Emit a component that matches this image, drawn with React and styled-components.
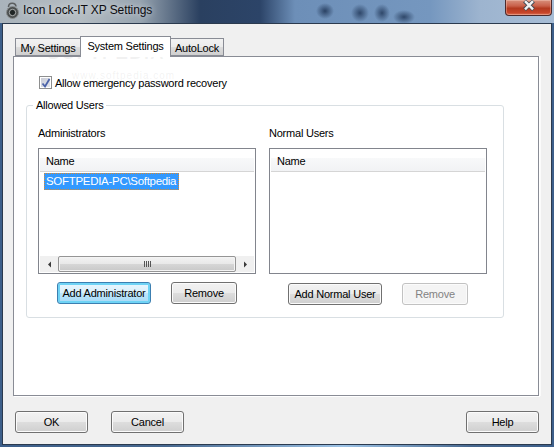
import styled, { createGlobalStyle } from 'styled-components';

const GlobalStyle = createGlobalStyle`
  html, body {
    margin: 0;
    padding: 0;
    width: 554px;
    height: 447px;
    overflow: hidden;
    font-family: "Liberation Sans", Arial, sans-serif;
    font-size: 11px;
    letter-spacing: -0.22px;
    color: #000;
  }
  * { box-sizing: border-box; }
`;

const Window = styled.div`
  position: relative;
  width: 554px;
  height: 447px;
  display: flex;
  flex-direction: column;
  overflow: hidden;
  background: linear-gradient(90deg, #3d5f8a 0, #47688f 30%, #9dc3e6 62%, #47688f 85%, #3d5f8a 100%);
`;

const TitleBar = styled.div`
  height: 23px;
  flex: none;
  display: flex;
  align-items: flex-start;
  padding-left: 5px;
  background:
    radial-gradient(ellipse 9px 8px at 325px 11px, rgba(30, 52, 85, 0.85), transparent),
    radial-gradient(ellipse 9px 9px at 360px 13px, rgba(30, 52, 85, 0.8), transparent),
    radial-gradient(ellipse 8px 9px at 382px 13px, rgba(30, 52, 85, 0.8), transparent),
    radial-gradient(ellipse 11px 7px at 404px 17px, rgba(30, 52, 85, 0.8), transparent),
    linear-gradient(90deg, #a9b3bb 0, #b4bcc2 80px, #97a4b0 140px, #2a4060 200px, #2c4468 260px, #6d8fb8 295px, #7597bf 430px, #9db4cf 480px, #a7bdd6 554px);
`;

const AppIcon = styled.svg`
  width: 15px;
  height: 18px;
  margin-top: 1px;
  flex: none;
`;

const TitleText = styled.span`
  margin: 2px 0 0 3px;
  font-size: 12px;
  line-height: 16px;
  letter-spacing: -0.1px;
  color: #0c0c10;
  text-shadow: 0 0 6px rgba(255, 255, 255, 0.75);
`;

const CloseButton = styled.div`
  width: 47px;
  height: 16px;
  margin-left: auto;
  margin-right: 2px;
  display: flex;
  align-items: flex-start;
  justify-content: center;
  border: 1px solid #4c2a2c;
  border-top: 0;
  border-radius: 0 0 4px 4px;
  box-shadow: inset 0 0 0 1px rgba(255, 220, 210, 0.35);
  background: linear-gradient(180deg, #d8907c 0, #c9604a 40%, #b23a20 55%, #c8452a 85%, #d9765a 100%);
`;

const Client = styled.div`
  flex: 1;
  margin: 0 2px 2px 2px;
  border: 1px solid #2b3a4e;
  background: #f0f0f0;
  display: flex;
  flex-direction: column;
  padding: 0 12px 0 10px;
`;

const TabStrip = styled.div`
  height: 32px;
  flex: none;
  display: flex;
  align-items: flex-end;
  padding-left: 2px;
  position: relative;
  z-index: 1;
`;

const Tab = styled.div`
  height: ${(p) => (p.$active ? '21px' : '18px')};
  width: ${(p) => p.$width}px;
  margin-left: ${(p) => (p.$active ? '-1px' : '0')};
  margin-right: ${(p) => (p.$active ? '-1px' : '0')};
  padding-top: 2px;
  border: 1px solid #898c95;
  border-bottom: ${(p) => (p.$active ? '0' : '1px solid #898c95')};
  background: ${(p) => (p.$active ? '#fff' : 'linear-gradient(180deg, #f2f2f2 0, #ebebeb 50%, #dcdcdc 52%, #cfcfcf 100%)')};
  position: relative;
  z-index: ${(p) => (p.$active ? 2 : 1)};
  margin-bottom: ${(p) => (p.$active ? '-1px' : '0')};
  text-align: center;
  line-height: 14px;
  white-space: nowrap;
`;

const TabPanel = styled.div`
  height: 340px;
  flex: none;
  background: #fff;
  border: 1px solid #898c95;
  box-shadow: 1px 1px 0 #fff, 2px 0 0 #fbfbfb;
  padding: 19px 12px 0 12px;
  display: flex;
  flex-direction: column;
`;

const CheckRow = styled.div`
  display: flex;
  align-items: center;
  height: 13px;
  margin-left: 13px;
  gap: 3px;
`;

const CheckBox = styled.div`
  width: 13px;
  height: 13px;
  flex: none;
  border: 1px solid #8e8f8f;
  background: linear-gradient(135deg, #c6c9d4, #e6e8ef);
  box-shadow: inset 0 0 0 1px #fff;
  display: flex;
  align-items: center;
  justify-content: center;
`;

const GroupBox = styled.div`
  position: relative;
  margin-top: 16px;
  height: 213px;
  width: 478px;
  border: 1px solid #d9dfe3;
  border-radius: 3px;
  padding: 20px 11px 0 11px;
  display: grid;
  grid-template-columns: 218px 218px;
  column-gap: 13px;
`;

const GroupLegend = styled.span`
  position: absolute;
  top: -8px;
  left: 6px;
  padding: 0 3px;
  background: #fff;
  line-height: 15px;
`;

const Column = styled.div`
  display: flex;
  flex-direction: column;
`;

const FieldLabel = styled.div`
  height: 15px;
  line-height: 15px;
  margin-bottom: 7px;
`;

const ListBox = styled.div`
  height: 126px;
  border: 1px solid #82858d;
  background: #fff;
  padding: 9px 1px 1px 1px;
  display: flex;
  flex-direction: column;
`;

const ListHeader = styled.div`
  height: 14px;
  flex: none;
  padding-left: 6px;
  line-height: 6px;
  border-bottom: 1px solid #d5d5d5;
  background: linear-gradient(180deg, #f8f9fa, #f1f2f4);
`;

const ListBody = styled.div`
  flex: 1;
  padding: 1px 0 0 4px;
`;

const ListRow = styled.div`
  display: inline-block;
  height: 17px;
  width: 135px;
  padding-left: 2px;
  line-height: 16px;
  font-size: 11.5px;
  letter-spacing: -0.3px;
  color: #fff;
  background: #3399ff;
  outline: 1px dotted #d98a30;
  outline-offset: -1px;
  white-space: nowrap;
`;

const ScrollBar = styled.div`
  height: 16px;
  flex: none;
  display: flex;
  align-items: stretch;
  background: #f0f0f0;
`;

const ScrollArrow = styled.div`
  width: 18px;
  flex: none;
  display: flex;
  align-items: center;
  justify-content: center;
`;

const ScrollThumb = styled.div`
  flex: 1;
  border: 1px solid #959595;
  border-radius: 2px;
  box-shadow: inset 0 0 0 1px #f4f4f4;
  background: linear-gradient(180deg, #f3f3f3 0, #e8e8e8 50%, #d6d6d6 52%, #c8c8c8 100%);
  display: flex;
  align-items: center;
  justify-content: center;
  gap: 1px;
`;

const GripLine = styled.i`
  width: 1px;
  height: 6px;
  background: #555;
`;

const ButtonRow = styled.div`
  display: flex;
  margin-top: ${(p) => p.$top}px;
  padding-left: 19px;
  gap: 20px;
`;

const Button = styled.div`
  width: ${(p) => p.$width}px;
  height: 22px;
  display: flex;
  align-items: center;
  justify-content: center;
  white-space: nowrap;
  border-radius: 3px;
  border: 1px solid ${(p) => (p.$default ? '#3c7fb1' : p.$disabled ? '#c2c2c2' : '#707070')};
  color: ${(p) => (p.$disabled ? '#838383' : '#000')};
  box-shadow: ${(p) => (p.$default ? 'inset 0 0 0 2px #6fd3f5' : 'inset 0 0 0 1px #fbfbfb')};
  background: ${(p) => (p.$disabled
    ? '#f4f4f4'
    : p.$default
      ? 'linear-gradient(180deg, #eaf6fd 0, #d9f0fc 50%, #bee6fd 52%, #a7d9f5 100%)'
      : 'linear-gradient(180deg, #f2f2f2 0, #ebebeb 50%, #dddddd 52%, #cfcfcf 100%)')};
`;

const Footer = styled.div`
  flex: 1;
  display: flex;
  align-items: flex-start;
  padding: 15px 0 0 2px;
  gap: 23px;
`;

const FooterSpacer = styled.div`
  flex: 1;
`;

const Watermark = styled.div`
  position: absolute;
  left: ${(p) => p.$left}px;
  top: ${(p) => p.$top}px;
  font-size: ${(p) => p.$size}px;
  font-weight: ${(p) => p.$weight};
  color: rgba(150, 150, 150, 0.12);
  letter-spacing: 1px;
  white-space: nowrap;
  pointer-events: none;
`;

const Triangle = ({ dir }) => (
  <svg width="5" height="7" viewBox="0 0 5 7">
    <path d={dir === 'left' ? 'M4 0.5 L1 3.5 L4 6.5 Z' : 'M1 0.5 L4 3.5 L1 6.5 Z'} fill="#3a3a3a" />
  </svg>
);

export default function App() {
  return (
    <>
      <GlobalStyle />
      <Window>
        <TitleBar>
          <AppIcon viewBox="0 0 15 18">
            <path d="M3.5 6 C3.5 1 10.5 1 11 5.5" fill="none" stroke="#5c5f60" strokeWidth="1.6" />
            <circle cx="7.5" cy="11.5" r="6" fill="#4c5050" stroke="#8b8f90" strokeWidth="1" />
            <circle cx="7.5" cy="11.5" r="3.2" fill="#1f2525" stroke="#c9cccc" strokeWidth="0.8" />
          </AppIcon>
          <TitleText>Icon Lock-IT XP Settings</TitleText>
          <CloseButton>
            <svg width="14" height="11" viewBox="0 0 14 11">
              <path d="M2.5 1 L11.5 9.5 M11.5 1 L2.5 9.5" stroke="#3f4a55" strokeWidth="4" />
              <path d="M3 1.2 L11 9.3 M11 1.2 L3 9.3" stroke="#f2f2f2" strokeWidth="2.4" />
            </svg>
          </CloseButton>
        </TitleBar>
        <Client>
          <TabStrip>
            <Tab $width={66}>My Settings</Tab>
            <Tab $active $width={91}>System Settings</Tab>
            <Tab $width={54}>AutoLock</Tab>
          </TabStrip>
          <TabPanel>
            <CheckRow>
              <CheckBox>
                <svg width="10" height="10" viewBox="0 0 10 10">
                  <path d="M1.5 5.5 L4 8.5 L8.5 1" fill="none" stroke="#4a62a8" strokeWidth="1.8" />
                </svg>
              </CheckBox>
              Allow emergency password recovery
            </CheckRow>
            <GroupBox>
              <GroupLegend>Allowed Users</GroupLegend>
              <Column>
                <FieldLabel>Administrators</FieldLabel>
                <ListBox>
                  <ListHeader>Name</ListHeader>
                  <ListBody>
                    <ListRow>SOFTPEDIA-PC\Softpedia</ListRow>
                  </ListBody>
                  <ScrollBar>
                    <ScrollArrow><Triangle dir="left" /></ScrollArrow>
                    <ScrollThumb><GripLine /><GripLine /><GripLine /><GripLine /></ScrollThumb>
                    <ScrollArrow><Triangle dir="right" /></ScrollArrow>
                  </ScrollBar>
                </ListBox>
                <ButtonRow $top={8}>
                  <Button $default $width={94}>Add Administrator</Button>
                  <Button $width={66}>Remove</Button>
                </ButtonRow>
              </Column>
              <Column>
                <FieldLabel>Normal Users</FieldLabel>
                <ListBox>
                  <ListHeader>Name</ListHeader>
                </ListBox>
                <ButtonRow $top={9}>
                  <Button $width={94}>Add Normal User</Button>
                  <Button $disabled $width={66}>Remove</Button>
                </ButtonRow>
              </Column>
            </GroupBox>
          </TabPanel>
          <Footer>
            <Button $width={73}>OK</Button>
            <Button $width={73}>Cancel</Button>
            <FooterSpacer />
            <Button $width={73}>Help</Button>
          </Footer>
        </Client>
        <Watermark $left={47} $top={42} $size={19} $weight={700}>SOFTPEDIA</Watermark>
        <Watermark $left={72} $top={70} $size={10} $weight={400}>www.softpedia.com</Watermark>
      </Window>
    </>
  );
}
